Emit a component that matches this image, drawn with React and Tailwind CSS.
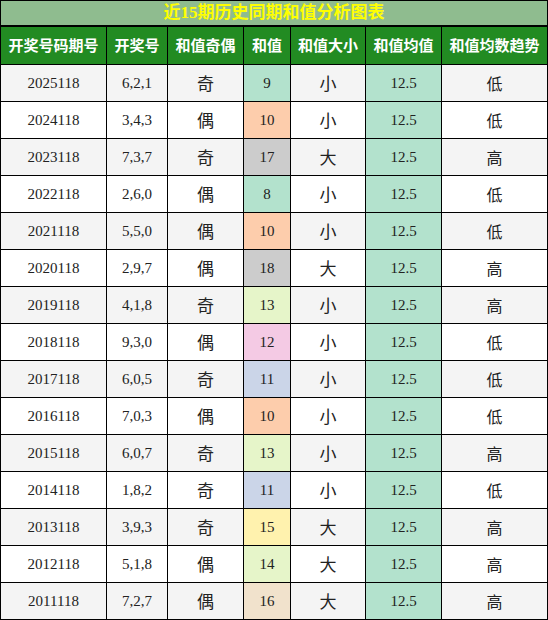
const rows = [
  ['2025118', '6,2,1', '奇', 9, '#b3e2cd', '小', '低'],
  ['2024118', '3,4,3', '偶', 10, '#fdcdac', '小', '低'],
  ['2023118', '7,3,7', '奇', 17, '#cccccc', '大', '高'],
  ['2022118', '2,6,0', '偶', 8, '#b3e2cd', '小', '低'],
  ['2021118', '5,5,0', '偶', 10, '#fdcdac', '小', '低'],
  ['2020118', '2,9,7', '偶', 18, '#cccccc', '大', '高'],
  ['2019118', '4,1,8', '奇', 13, '#e6f5c9', '小', '高'],
  ['2018118', '9,3,0', '偶', 12, '#f4cae4', '小', '低'],
  ['2017118', '6,0,5', '奇', 11, '#cbd5e8', '小', '低'],
  ['2016118', '7,0,3', '偶', 10, '#fdcdac', '小', '低'],
  ['2015118', '6,0,7', '奇', 13, '#e6f5c9', '小', '高'],
  ['2014118', '1,8,2', '奇', 11, '#cbd5e8', '小', '低'],
  ['2013118', '3,9,3', '奇', 15, '#fff2ae', '大', '高'],
  ['2012118', '5,1,8', '偶', 14, '#e6f5c9', '大', '高'],
  ['2011118', '7,2,7', '偶', 16, '#f1e2cc', '大', '高'],
];

const headers = ['开奖号码期号', '开奖号', '和值奇偶', '和值', '和值大小', '和值均值', '和值均数趋势'];

const serif = "font-['Liberation_Serif','Noto_Sans_CJK_SC',serif]";
const cjk = "font-['Noto_Sans_CJK_SC',sans-serif]";

export default function App() {
  return (
    <div className="w-[548px] h-[620px] bg-black p-px flex flex-col text-[#222]">
      <div className={`h-[24px] mb-[2px] bg-[#8fbc8f] flex items-center justify-center text-[17px] font-bold text-[#ffff00] ${serif}`}>
        近15期历史同期和值分析图表
      </div>
      <div className="grid grid-cols-[105px_60px_75px_46px_74px_75px_105px] gap-px">
        {headers.map((h) => (
          <div key={h} className={`h-[37px] bg-[#228b22] text-white font-bold text-[15px] flex items-center justify-center ${cjk}`}>
            {h}
          </div>
        ))}
        {rows.map((r, i) => {
          const bg = i % 2 === 0 ? 'bg-[#f4f4f4]' : 'bg-white';
          const cell = 'h-[36px] flex items-center justify-center';
          return [
            <div key={i + 'a'} className={`${cell} ${bg} ${serif} text-[15px]`}>{r[0]}</div>,
            <div key={i + 'b'} className={`${cell} ${bg} ${serif} text-[15px]`}>{r[1]}</div>,
            <div key={i + 'c'} className={`${cell} ${bg} ${cjk} text-[17px]`}>{r[2]}</div>,
            <div key={i + 'd'} className={`${cell} ${serif} text-[15px]`} style={{ backgroundColor: r[4] }}>{r[3]}</div>,
            <div key={i + 'e'} className={`${cell} ${bg} ${cjk} text-[17px]`}>{r[5]}</div>,
            <div key={i + 'f'} className={`${cell} bg-[#b3e2cd] ${serif} text-[15px]`}>12.5</div>,
            <div key={i + 'g'} className={`${cell} ${bg} ${cjk} text-[16px]`}>{r[6]}</div>,
          ];
        })}
      </div>
    </div>
  );
}
